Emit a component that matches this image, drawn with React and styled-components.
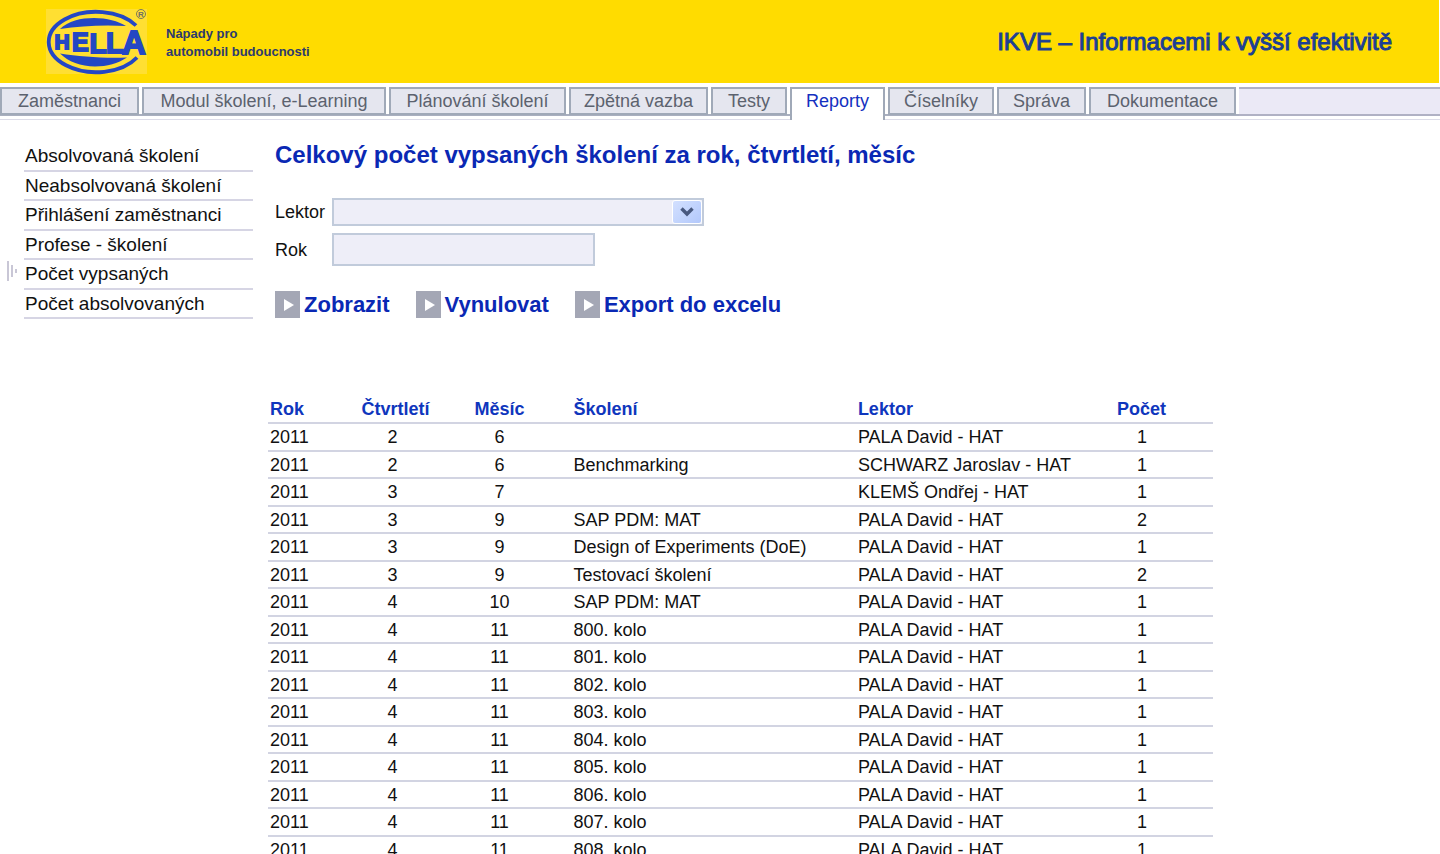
import React from "react";
import styled, { createGlobalStyle } from "styled-components";

const GlobalStyle = createGlobalStyle`
  * { box-sizing: border-box; }
  body {
    margin: 0;
    background: #fff;
    color: #111;
    font-family: "Liberation Sans", Arial, sans-serif;
    font-size: 18px;
    overflow-x: hidden;
  }
`;

const Banner = styled.header`
  display: flex;
  align-items: center;
  height: 83px;
  margin-right: 1px;
  padding: 0 47px 0 46px;
  background: #ffdc00;
  color: #1c3f94;
`;

const Slogan = styled.p`
  margin: 2px 0 0 19px;
  font-size: 13px;
  line-height: 18px;
  font-weight: bold;
  color: #2d3a6e;
`;

const AppName = styled.p`
  margin: 0 0 0 auto;
  font-size: 24px;
  line-height: 28px;
  -webkit-text-stroke: 1px currentColor;
`;

const TabBar = styled.nav`
  display: flex;
  gap: 3px;
  height: 33px;
  margin-top: 4px;
  border-bottom: 1px solid #dcdce8;
  background: linear-gradient(#a9afbf, #a9afbf) 0 27px / 100% 2px no-repeat;
`;

const Tab = styled.a`
  flex: none;
  width: ${(p) => p.$width}px;
  height: ${(p) => (p.$active ? 33 : 28)}px;
  border: 2px solid #a0a9b8;
  border-width: ${(p) => (p.$active ? "2px 2px 0" : "2px")};
  background: ${(p) => (p.$active ? "#fff" : "#e5e6ef")};
  color: ${(p) => (p.$active ? "#1430c0" : "#5c626e")};
  font-size: 18px;
  line-height: 24px;
  text-align: center;
  text-decoration: none;
  white-space: nowrap;
`;

const TabRest = styled.div`
  flex: 1;
  height: 29px;
  border: solid #b0b1c4;
  border-width: 2px 0;
  background: #ebe9f6;
`;

const Page = styled.div`
  display: flex;
  align-items: flex-start;
`;

const SideMenu = styled.ul`
  flex: none;
  width: 253px;
  margin: 22px 15px 0 0;
  padding: 0;
  list-style: none;
`;

const SideItem = styled.li`
  display: flex;
  align-items: center;
  height: 30px;
  &:nth-child(even) { height: 29px; }
`;

const Marker = styled.span`
  flex: none;
  display: flex;
  width: 24px;
  padding: 0 0 8px 7px;
`;

const SideLink = styled.a`
  flex: 1;
  align-self: stretch;
  padding-left: 1px;
  border-bottom: 2px solid #d6d5e4;
  color: #111;
  font-size: 19px;
  line-height: 28px;
  text-decoration: none;
  white-space: nowrap;
`;

const Main = styled.main`
  flex: 1;
  min-width: 0;
`;

const Title = styled.h1`
  margin: 21px 0 0 7px;
  font-size: 24px;
  line-height: 28px;
  color: #0a28b4;
`;

const Filter = styled.form`
  margin: 29px 0 0 7px;
`;

const Field = styled.div`
  display: flex;
  align-items: center;
  margin-bottom: 7px;
`;

const Label = styled.label`
  width: 57px;
  font-size: 18px;
  line-height: 24px;
`;

const SelectBox = styled.div`
  position: relative;
  width: 372px;
  height: 28px;
`;

const Select = styled.select`
  appearance: none;
  display: block;
  width: 100%;
  height: 100%;
  border: 2px solid #c1cbdb;
  border-radius: 0;
  background: #eeeef8;
  font: inherit;
`;

const Arrow = styled.span`
  position: absolute;
  top: 2px;
  right: 2px;
  display: flex;
  align-items: center;
  justify-content: center;
  width: 30px;
  height: 24px;
  border: 1px solid #fff;
  border-radius: 3px;
  background: linear-gradient(135deg, #d3e0ff, #b2c8fb);
  pointer-events: none;
`;

const TextInput = styled.input`
  width: 263px;
  height: 33px;
  border: 2px solid #c1cbdb;
  border-radius: 0;
  background: #eeeef8;
  font: inherit;
`;

const Actions = styled.div`
  display: flex;
  gap: 26px;
  margin-top: 25px;
`;

const Action = styled.button`
  display: flex;
  align-items: center;
  gap: 4px;
  height: 27px;
  padding: 0;
  border: 0;
  background: none;
  color: #0a28b4;
  font: bold 22px/27px "Liberation Sans", Arial, sans-serif;
  white-space: nowrap;
`;

const Table = styled.table`
  width: 100%;
  max-width: 945px;
  margin-top: 78px;
  border-collapse: separate;
  border-spacing: 0;
  table-layout: fixed;
`;

const Row = styled.tr`
  height: 28px;
  &:nth-child(even) { height: 27px; }
`;

const HeadCell = styled.th`
  height: 28px;
  padding: 0 0 0 ${(p) => p.$indent || 0}px;
  border-bottom: 2px solid #d2d4e2;
  color: #0f36bd;
  font-size: 18px;
  line-height: 24px;
  text-align: ${(p) => (p.$center ? "center" : "left")};
`;

const Cell = styled.td`
  padding: 0 ${(p) => p.$inset || 0}px 0 ${(p) => p.$indent || 0}px;
  border-bottom: 2px solid #d2d4e2;
  font-size: 18px;
  line-height: 24px;
  text-align: ${(p) => (p.$center ? "center" : "left")};
  white-space: nowrap;
`;

const tabs = [
  ["Zaměstnanci", 139],
  ["Modul školení, e-Learning", 244],
  ["Plánování školení", 177],
  ["Zpětná vazba", 139],
  ["Testy", 76],
  ["Reporty", 95],
  ["Číselníky", 106],
  ["Správa", 89],
  ["Dokumentace", 147],
];

const sideItems = [
  "Absolvovaná školení",
  "Neabsolvovaná školení",
  "Přihlášení zaměstnanci",
  "Profese - školení",
  "Počet vypsaných",
  "Počet absolvovaných",
];

const PALA = "PALA David - HAT";
const rows = [
  [2, 6, "", PALA, 1],
  [2, 6, "Benchmarking", "SCHWARZ Jaroslav - HAT", 1],
  [3, 7, "", "KLEMŠ Ondřej - HAT", 1],
  [3, 9, "SAP PDM: MAT", PALA, 2],
  [3, 9, "Design of Experiments (DoE)", PALA, 1],
  [3, 9, "Testovací školení", PALA, 2],
  [4, 10, "SAP PDM: MAT", PALA, 1],
  ...[800, 801, 802, 803, 804, 805, 806, 807, 808].map((n) => [4, 11, `${n}. kolo`, PALA, 1]),
];

function Logo() {
  return (
    <svg width="101" height="66" viewBox="46 9 101 66" role="img" aria-label="Hella">
      <rect x="46" y="9" width="101" height="65" fill="#ffdf32" />
      <g fill="none" stroke="#2447c4" strokeWidth="3.8">
        <path d="M136 25.500A47.500 30.200 0 1 0 137 57.500" />
      </g>
      <g fill="#2447c4">
        <path d="M60 29C68 21 81 18 94 18C107 18 118 21 126 26C104 24.500 80 26 60 29Z" />
        <path d="M60 53.500C80 56.500 104 58.500 127 57.500C118 63.500 107 66.500 95 66.500C81 66.500 68 61.500 60 53.500Z" />
        <g fontFamily="Liberation Sans" fontWeight="bold" stroke="#2447c4" strokeWidth="1.8">
          <text x="54.500" y="49" fontSize="21">H</text>
          <text x="72" y="51" fontSize="25">E</text>
          <text x="89.500" y="52.500" fontSize="28">L</text>
          <text x="106" y="53" fontSize="29">L</text>
          <text x="122" y="53.500" fontSize="33">A</text>
        </g>
      </g>
      <circle cx="141" cy="14" r="4.500" fill="none" stroke="#7c7a55" strokeWidth="1" />
      <text x="141" y="17" fontSize="8" fontFamily="Liberation Sans" fontWeight="bold" textAnchor="middle" fill="#6c6e66">R</text>
    </svg>
  );
}

function PlayIcon() {
  return (
    <svg width="25" height="27" viewBox="0 0 25 27" aria-hidden="true">
      <rect width="25" height="27" fill="#a4a7b5" />
      <path d="M9 8L19 14L9 20Z" fill="#fff" />
    </svg>
  );
}

export default function App() {
  return (
    <>
      <GlobalStyle />
      <Banner>
        <Logo />
        <Slogan>
          Nápady pro
          <br />
          automobil budoucnosti
        </Slogan>
        <AppName>IKVE – Informacemi k vyšší efektivitě</AppName>
      </Banner>
      <TabBar>
        {tabs.map(([name, width]) => (
          <Tab key={name} href="#" $width={width} $active={name === "Reporty"}>
            {name}
          </Tab>
        ))}
        <TabRest />
      </TabBar>
      <Page>
        <SideMenu>
          {sideItems.map((name) => (
            <SideItem key={name}>
              <Marker>
                {name === "Počet vypsaných" && (
                  <svg width="10" height="20" viewBox="0 0 10 20" fill="#c9c7d6" aria-hidden="true">
                    <path d="M0 0h2v20H0zM4 4h2v12H4zM8 8h2v4H8z" />
                  </svg>
                )}
              </Marker>
              <SideLink href="#">{name}</SideLink>
            </SideItem>
          ))}
        </SideMenu>
        <Main>
          <Title>Celkový počet vypsaných školení za rok, čtvrtletí, měsíc</Title>
          <Filter onSubmit={(e) => e.preventDefault()}>
            <Field>
              <Label htmlFor="lektor">Lektor</Label>
              <SelectBox>
                <Select id="lektor">
                  <option value=""></option>
                </Select>
                <Arrow>
                  <svg width="14" height="10" viewBox="0 0 14 10" aria-hidden="true">
                    <path d="M1.500 1.500L7 7L12.500 1.500" fill="none" stroke="#48597f" strokeWidth="3.4" />
                  </svg>
                </Arrow>
              </SelectBox>
            </Field>
            <Field>
              <Label htmlFor="rok">Rok</Label>
              <TextInput id="rok" type="text" />
            </Field>
            <Actions>
              {["Zobrazit", "Vynulovat", "Export do excelu"].map((name) => (
                <Action key={name} type="button">
                  <PlayIcon />
                  {name}
                </Action>
              ))}
            </Actions>
          </Filter>
          <Table>
            <colgroup>
              <col style={{ width: "8%" }} />
              <col style={{ width: "11%" }} />
              <col style={{ width: "11%" }} />
              <col style={{ width: "32%" }} />
              <col style={{ width: "27%" }} />
              <col style={{ width: "11%" }} />
            </colgroup>
            <thead>
              <tr>
                <HeadCell $indent={2}>Rok</HeadCell>
                <HeadCell $center>Čtvrtletí</HeadCell>
                <HeadCell $center>Měsíc</HeadCell>
                <HeadCell $indent={22}>Školení</HeadCell>
                <HeadCell $indent={4}>Lektor</HeadCell>
                <HeadCell $indent={8}>Počet</HeadCell>
              </tr>
            </thead>
            <tbody>
              {rows.map(([quarter, month, course, teacher, count], i) => (
                <Row key={i}>
                  <Cell $indent={2}>2011</Cell>
                  <Cell $center $inset={6}>{quarter}</Cell>
                  <Cell $center>{month}</Cell>
                  <Cell $indent={22}>{course}</Cell>
                  <Cell $indent={4}>{teacher}</Cell>
                  <Cell $indent={28}>{count}</Cell>
                </Row>
              ))}
            </tbody>
          </Table>
        </Main>
      </Page>
    </>
  );
}
